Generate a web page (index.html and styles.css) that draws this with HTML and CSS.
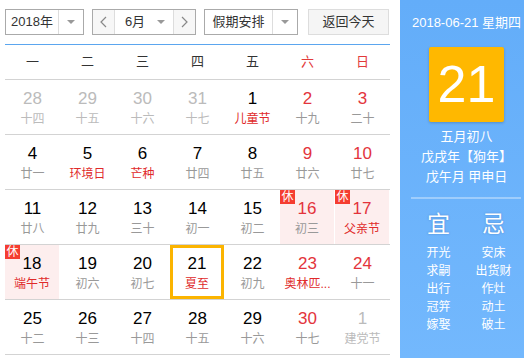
FILE: index.html
```html
<!DOCTYPE html>
<html lang="zh">
<head>
  <meta charset="UTF-8" />
  <meta name="viewport" content="width=device-width, initial-scale=1.0"/>
  <title>万年历</title>
  <link rel="stylesheet" href="styles.css">
</head>
<body>
  <div class="pagina">
    <div class="principal">
      <div class="barra">
        <div class="selector anio">
          <span class="valor">2018年</span>
          <span class="flecha"></span>
        </div>
        <div class="selector mes">
          <span class="paso">
            <svg width="7" height="12" viewBox="0 0 7 12"><polyline points="6,1 1,6 6,11" fill="none" stroke="#888" stroke-width="1.2"/></svg>
          </span>
          <span class="valor">6月</span>
          <span class="flecha sin-linea"></span>
          <span class="paso derecha">
            <svg width="7" height="12" viewBox="0 0 7 12"><polyline points="1,1 6,6 1,11" fill="none" stroke="#888" stroke-width="1.2"/></svg>
          </span>
        </div>
        <div class="selector vacaciones">
          <span class="valor">假期安排</span>
          <span class="flecha"></span>
        </div>
        <div class="hoy-btn">返回今天</div>
      </div>
      <div class="linea-azul"></div>

      <div class="semana">
        <span>一</span><span>二</span><span>三</span><span>四</span><span>五</span>
        <span class="rojo">六</span><span class="rojo">日</span>
      </div>

      <div class="fila">
        <div class="dia apagado"><div class="num">28</div><div class="lunar">十四</div></div>
        <div class="dia apagado"><div class="num">29</div><div class="lunar">十五</div></div>
        <div class="dia apagado"><div class="num">30</div><div class="lunar">十六</div></div>
        <div class="dia apagado"><div class="num">31</div><div class="lunar">十七</div></div>
        <div class="dia"><div class="num">1</div><div class="lunar fiesta">儿童节</div></div>
        <div class="dia finde"><div class="num">2</div><div class="lunar">十九</div></div>
        <div class="dia finde"><div class="num">3</div><div class="lunar">二十</div></div>
      </div>

      <div class="fila">
        <div class="dia"><div class="num">4</div><div class="lunar">廿一</div></div>
        <div class="dia"><div class="num">5</div><div class="lunar fiesta">环境日</div></div>
        <div class="dia"><div class="num">6</div><div class="lunar fiesta">芒种</div></div>
        <div class="dia"><div class="num">7</div><div class="lunar">廿四</div></div>
        <div class="dia"><div class="num">8</div><div class="lunar">廿五</div></div>
        <div class="dia finde"><div class="num">9</div><div class="lunar">廿六</div></div>
        <div class="dia finde"><div class="num">10</div><div class="lunar">廿七</div></div>
      </div>

      <div class="fila">
        <div class="dia"><div class="num">11</div><div class="lunar">廿八</div></div>
        <div class="dia"><div class="num">12</div><div class="lunar">廿九</div></div>
        <div class="dia"><div class="num">13</div><div class="lunar">三十</div></div>
        <div class="dia"><div class="num">14</div><div class="lunar">初一</div></div>
        <div class="dia"><div class="num">15</div><div class="lunar">初二</div></div>
        <div class="dia finde libre"><span class="xiu">休</span><div class="num">16</div><div class="lunar">初三</div></div>
        <div class="dia finde libre"><span class="xiu">休</span><div class="num">17</div><div class="lunar fiesta">父亲节</div></div>
      </div>

      <div class="fila">
        <div class="dia libre"><span class="xiu">休</span><div class="num">18</div><div class="lunar fiesta">端午节</div></div>
        <div class="dia"><div class="num">19</div><div class="lunar">初六</div></div>
        <div class="dia"><div class="num">20</div><div class="lunar">初七</div></div>
        <div class="dia hoy"><div class="num">21</div><div class="lunar fiesta">夏至</div></div>
        <div class="dia"><div class="num">22</div><div class="lunar">初九</div></div>
        <div class="dia finde"><div class="num">23</div><div class="lunar fiesta" title="奥林匹克日">奥林匹...</div></div>
        <div class="dia finde"><div class="num">24</div><div class="lunar">十一</div></div>
      </div>

      <div class="fila">
        <div class="dia"><div class="num">25</div><div class="lunar">十二</div></div>
        <div class="dia"><div class="num">26</div><div class="lunar">十三</div></div>
        <div class="dia"><div class="num">27</div><div class="lunar">十四</div></div>
        <div class="dia"><div class="num">28</div><div class="lunar">十五</div></div>
        <div class="dia"><div class="num">29</div><div class="lunar">十六</div></div>
        <div class="dia finde"><div class="num">30</div><div class="lunar">十七</div></div>
        <div class="dia apagado"><div class="num">1</div><div class="lunar">建党节</div></div>
      </div>
    </div>

    <div class="lateral">
      <div class="fecha">2018-06-21 星期四</div>
      <div class="grande">21</div>
      <div class="info">
        <div>五月初八</div>
        <div>戊戌年【狗年】</div>
        <div>戊午月 甲申日</div>
      </div>
      <div class="separador"></div>
      <div class="yiji">
        <div class="columna">
          <div class="titulo">宜</div>
          <div class="lista">开光<br>求嗣<br>出行<br>冠笄<br>嫁娶</div>
        </div>
        <div class="columna">
          <div class="titulo">忌</div>
          <div class="lista">安床<br>出货财<br>作灶<br>动土<br>破土</div>
        </div>
      </div>
    </div>
  </div>
</body>
</html>
```

FILE: styles.css
```css
body {
  margin: 0;
  font-family: "Liberation Sans", Arial, "Noto Sans CJK SC", sans-serif;
  background: #fff;
  overflow: hidden;
}

.pagina {
  display: flex;
  height: 358px;
}

.principal {
  width: 385px;
  padding: 9px 10px 0 5px;
}

/* barra superior */
.barra {
  display: flex;
  height: 26px;
}

.selector {
  display: flex;
  box-sizing: border-box;
  height: 26px;
  border: 1px solid #aaa;
  font-size: 13px;
  color: #333;
}

.selector .valor {
  flex: 1;
  text-align: center;
  line-height: 24px;
}

.flecha {
  width: 24px;
  border-left: 1px solid #ddd;
  display: flex;
  align-items: center;
  justify-content: center;
}

.flecha::after {
  content: "";
  border-left: 4px solid transparent;
  border-right: 4px solid transparent;
  border-top: 4px solid #999;
}

.flecha.sin-linea {
  border-left: none;
}

.anio {
  width: 79px;
}

.mes {
  width: 104px;
  margin-left: 8px;
}

.mes .valor {
  padding-left: 6px;
}

.paso {
  width: 21px;
  background: #f7f7f7;
  border-right: 1px solid #ddd;
  display: flex;
  align-items: center;
  justify-content: center;
}

.paso.derecha {
  border-right: none;
  border-left: 1px solid #ddd;
}

.vacaciones {
  width: 94px;
  margin-left: 8px;
}

.hoy-btn {
  width: 81px;
  box-sizing: border-box;
  height: 26px;
  margin-left: 10px;
  border: 1px solid #ddd;
  background: #f5f5f5;
  font-size: 13px;
  color: #333;
  text-align: center;
  line-height: 24px;
}

.linea-azul {
  margin-top: 9px;
  height: 1px;
  background: #5ba6ef;
}

/* calendario */
.semana {
  display: grid;
  grid-template-columns: repeat(7, 55px);
  height: 34px;
  line-height: 34px;
  border-bottom: 1px solid #d3d3d3;
  text-align: center;
  font-size: 13px;
  color: #333;
}

.semana .rojo {
  color: #e23a3a;
}

.fila {
  display: grid;
  grid-template-columns: repeat(7, 55px);
  border-bottom: 1px solid #d3d3d3;
}

.dia {
  position: relative;
  box-sizing: border-box;
  height: 54px;
  padding-top: 9px;
  text-align: center;
}

.num {
  font-size: 17px;
  line-height: 20px;
  color: #000;
}

.lunar {
  font-size: 12px;
  line-height: 20px;
  color: #999;
  white-space: nowrap;
}

.finde .num {
  color: #e3343c;
}

.lunar.fiesta {
  color: #e02a2a;
}

.apagado .num,
.apagado .lunar {
  color: #bbb;
}

.libre {
  background: #fdeeee;
  margin-right: 1px;
}

.xiu {
  position: absolute;
  left: 0;
  top: 0;
  width: 15px;
  height: 14px;
  background: #f53d31;
  color: #fff;
  font-size: 12px;
  line-height: 14px;
  text-align: center;
}

.hoy {
  outline: 3px solid #fbb400;
  outline-offset: -3px;
  margin-right: 1px;
}

/* panel lateral */
.lateral {
  width: 115px;
  padding: 13px 0 0 9px;
  background: linear-gradient(#63adf9, #73b8fd);
  color: #fff;
}

.fecha {
  font-size: 13px;
  line-height: 20px;
  text-align: center;
  white-space: nowrap;
}

.grande {
  width: 75px;
  height: 75px;
  margin: 14px auto 0;
  background: #ffb800;
  border-radius: 2px;
  box-shadow: 0 1px 3px rgba(0,0,0,0.2);
  font-size: 52px;
  line-height: 75px;
  text-align: center;
}

.info {
  margin-top: 5px;
  font-size: 13px;
  line-height: 20px;
  text-align: center;
  white-space: nowrap;
}

.separador {
  margin: 10px 3px 0 2px;
  height: 2px;
  background: rgba(255,255,255,0.35);
}

.yiji {
  display: grid;
  grid-template-columns: 55px 55px;
  margin-left: 2px;
  text-align: center;
}

.titulo {
  margin-top: 10px;
  font-size: 23px;
  line-height: 30px;
  text-shadow: 0 0 2px rgba(0,40,120,0.35);
}

.lista {
  margin-top: 5px;
  font-size: 12px;
  line-height: 18px;
}
```
